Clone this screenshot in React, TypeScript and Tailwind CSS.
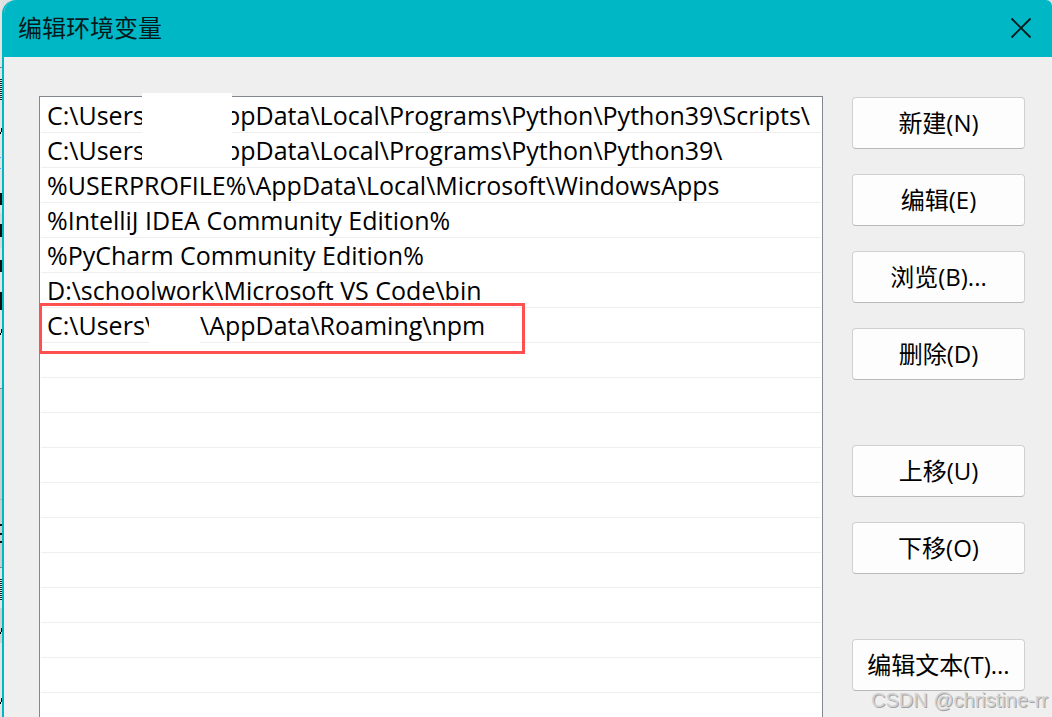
import React from "react";

type Entry = { text: string; tail?: string; headClass?: string };

const entries: Entry[] = [
  { text: "C:\\Users\\", tail: "ppData\\Local\\Programs\\Python\\Python39\\Scripts\\", headClass: "w-[178px]" },
  { text: "C:\\Users\\", tail: "ppData\\Local\\Programs\\Python\\Python39\\", headClass: "w-[178px]" },
  { text: "%USERPROFILE%\\AppData\\Local\\Microsoft\\WindowsApps" },
  { text: "%IntelliJ IDEA Community Edition%" },
  { text: "%PyCharm Community Edition%" },
  { text: "D:\\schoolwork\\Microsoft VS Code\\bin" },
  { text: "C:\\Users\\", tail: "\\AppData\\Roaming\\npm", headClass: "w-[153px]" },
];

const emptyRows = Array.from({ length: 11 }, (_, i) => i);

const buttonGroups = [
  ["新建(N)", "编辑(E)", "浏览(B)...", "删除(D)"],
  ["上移(U)", "下移(O)"],
  ["编辑文本(T)..."],
];

function BackgroundEdge() {
  return (
    <svg aria-hidden="true" className="h-full w-0.5 shrink-0" width="2" height="717" shapeRendering="crispEdges">
      <rect width="2" height="717" fill="#e3e3e3" />
      <rect y="388" width="2" height="179" fill="#cdcdcd" />
      <rect y="213" width="2" height="35" fill="#d9d9d9" />
      <rect y="608" width="2" height="35" fill="#d0d0d0" />
      <path d="M0 67.500h2M0 388.500h2M0 567.500h2" stroke="#85858d" />
      <path d="M0 499.500h2" stroke="#b5b5b5" />
      <path d="M1 79v22M1 579v22" stroke="#222" strokeWidth="2" strokeDasharray="1 1" />
      <path d="M0 134l2-8v5l-2 4zM0 335l2-8v5l-2 4zM0 634l2-8v5l-2 4zM0 704l2-8v5l-2 4z" fill="#000" />
      <path d="M0 157.500h1M0 168.500h1" stroke="#5aa0ea" />
      <path d="M1 193v12M1 224v13M1 260v12M1 292v18" stroke="#111" strokeWidth="2" />
      <path d="M0 524.500h2M0 534h2M0 541.500h2" stroke="#111" strokeWidth="2" />
    </svg>
  );
}

export default function App() {
  return (
    <div className="flex h-screen overflow-hidden bg-[#e0e0e0] font-['Open_Sans','Noto_Sans_CJK_SC',sans-serif] text-black">
      <BackgroundEdge />
      <div className="flex min-w-0 flex-1 flex-col overflow-hidden rounded-tl-[14px] rounded-tr-md border-l-2 border-[#00b7c5] bg-[#efefef]">
        <header className="flex h-[57px] shrink-0 items-center justify-between bg-[#00b7c5] pr-5 pb-0.5 pl-3.5">
          <h1 className="text-[24px] leading-8 text-[#041a1c]">编辑环境变量</h1>
          <button type="button" aria-label="关闭" className="flex size-[22px] items-center justify-center">
            <svg width="22" height="22" viewBox="0 0 22 22" fill="none" stroke="#071a1c" strokeWidth="1.8">
              <path d="M1.500 1.500l19 19M20.500 1.500l-19 19" />
            </svg>
          </button>
        </header>

        <main className="flex min-h-0 flex-1 gap-[29px] pt-[39px] pr-[27px] pl-[35px]">
          <div className="relative min-w-0 flex-1">
            <ul className="h-full overflow-hidden border border-b-0 border-[#828790] bg-white p-px text-[25px] leading-[34px]">
              {entries.map((entry, i) => (
                <li key={i} className="flex h-[35px] border-b border-[#efefef] pl-1.5 whitespace-pre">
                  <span className={entry.headClass}>{entry.text}</span>
                  {entry.tail && <span>{entry.tail}</span>}
                </li>
              ))}
              {emptyRows.map((row) => (
                <li key={row} className="h-[35px] border-b border-[#efefef]" />
              ))}
            </ul>
            <div className="absolute -top-[3px] left-[103px] h-[74px] w-[90px] bg-white" />
            <div className="absolute top-[213px] left-[110px] h-[35px] w-[51px] bg-white" />
            <div className="absolute top-[207px] left-0 h-[51px] w-[486px] border-[3px] border-[#ff5050]" />
          </div>

          <div className="flex w-[173px] shrink-0 flex-col gap-[65px] pt-px">
            {buttonGroups.map((group) => (
              <div key={group[0]} className="flex flex-col gap-[25px]">
                {group.map((label) => (
                  <button
                    key={label}
                    type="button"
                    className="h-[52px] rounded border border-[#d0d0d0] border-b-[#b9b9b9] bg-[#fdfdfd] text-[24px] leading-8 whitespace-nowrap"
                  >
                    {label}
                  </button>
                ))}
              </div>
            ))}
          </div>
        </main>
      </div>
      <p className="absolute right-1 bottom-[5px] font-['Liberation_Sans',sans-serif] text-[20px] leading-6 text-[#d2d2d2] [text-shadow:1px_1px_0_#a3a3a3]">
        CSDN @christine-rr
      </p>
    </div>
  );
}
